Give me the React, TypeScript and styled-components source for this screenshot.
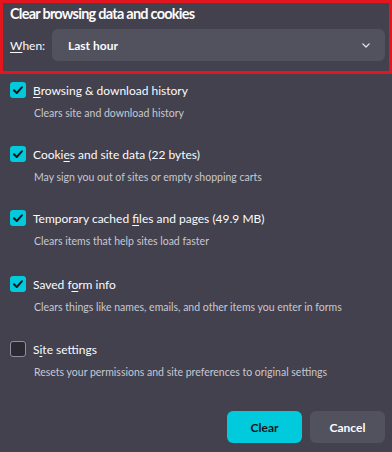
import React from "react";
import styled, { createGlobalStyle } from "styled-components";

const Global = createGlobalStyle`
  html, body { margin: 0; padding: 0; background: #42414d; }
  body { font-family: Lato, "Noto Sans", sans-serif; color: #fbfbfe; }
  * { box-sizing: border-box; }
`;

const Dialog = styled.div`
  width: 392px;
  height: 452px;
  background: #42414d;
  display: flex;
  flex-direction: column;
`;

const Header = styled.div`
  height: 74px;
  border: 3px solid #e2161e;
  padding: 1px 4px 0 7px;
  display: flex;
  flex-direction: column;
`;

const Title = styled.h1`
  margin: 0;
  font-size: 14.5px;
  font-weight: 700;
  letter-spacing: -0.75px;
  line-height: 20px;
`;

const WhenRow = styled.div`
  margin-top: 5px;
  display: flex;
  align-items: center;
`;

const WhenLabel = styled.label`
  font-size: 12px;
  width: 42px;
`;

const Select = styled.div`
  flex: 1;
  height: 32px;
  border-radius: 6px;
  background: #52525e;
  display: flex;
  align-items: center;
  padding: 0 15px 0 16px;
  font-size: 12px;
  font-weight: 700;
`;

const SelectText = styled.span`
  flex: 1;
`;

const List = styled.div`
  padding: 8px 0 0 10px;
  display: flex;
  flex-direction: column;
`;

const Item = styled.div<{ $gap: number }>`
  display: flex;
  flex-direction: column;
  margin-bottom: ${(p) => p.$gap}px;
`;

const Row = styled.label`
  display: flex;
  align-items: center;
  height: 16px;
  gap: 7px;
  font-size: 12px;
`;

const Box = styled.span<{ $checked: boolean }>`
  width: 16px;
  height: 16px;
  border-radius: 3px;
  flex: none;
  display: flex;
  align-items: center;
  justify-content: center;
  background: ${(p) => (p.$checked ? "#00cadb" : "#2b2a33")};
  border: ${(p) => (p.$checked ? "none" : "1px solid #8f8f9d")};
`;

const Desc = styled.div`
  margin-top: 7px;
  padding-left: 24px;
  font-size: 10.5px;
  line-height: 16px;
  color: #c8c8d2;
`;

const Footer = styled.div`
  margin-top: auto;
  display: flex;
  justify-content: flex-end;
  gap: 8px;
  padding: 0 7px 9px 0;
`;

const Button = styled.button<{ $primary?: boolean }>`
  width: 75px;
  height: 32px;
  border: none;
  border-radius: 6px;
  font-family: inherit;
  font-size: 12px;
  font-weight: 700;
  background: ${(p) => (p.$primary ? "#00cadb" : "#52525e")};
  color: ${(p) => (p.$primary ? "#15141a" : "#fbfbfe")};
`;

const U = styled.u`
  text-decoration-thickness: 1px;
  text-underline-offset: 2px;
`;

const Check = () => (
  <svg width="12" height="12" viewBox="0 0 12 12">
    <path d="M2 6.2 L4.8 9 L10 3.2" fill="none" stroke="#15141a" strokeWidth="2" strokeLinecap="round" strokeLinejoin="round" />
  </svg>
);

const Chevron = () => (
  <svg width="8" height="5" viewBox="0 0 8 5">
    <path d="M0.8 0.8 L4 4 L7.2 0.8" fill="none" stroke="#e8e8ee" strokeWidth="1.2" strokeLinecap="round" strokeLinejoin="round" />
  </svg>
);

type Opt = { label: React.ReactNode; desc: string; checked: boolean; gap: number };

const options: Opt[] = [
  { label: <><U>B</U>rowsing &amp; download history</>, desc: "Clears site and download history", checked: true, gap: 25 },
  { label: <>Cooki<U>e</U>s and site data (22 bytes)</>, desc: "May sign you out of sites or empty shopping carts", checked: true, gap: 25 },
  { label: <>Temporary cached <U>f</U>iles and pages (49.9 MB)</>, desc: "Clears items that help sites load faster", checked: true, gap: 27 },
  { label: <>Saved f<U>o</U>rm info</>, desc: "Clears things like names, emails, and other items you enter in forms", checked: true, gap: 26 },
  { label: <>S<U>i</U>te settings</>, desc: "Resets your permissions and site preferences to original settings", checked: false, gap: 0 },
];

export default function App() {
  return (
    <>
      <Global />
      <Dialog>
        <Header>
          <Title>Clear browsing data and cookies</Title>
          <WhenRow>
            <WhenLabel><U>W</U>hen:</WhenLabel>
            <Select>
              <SelectText>Last hour</SelectText>
              <Chevron />
            </Select>
          </WhenRow>
        </Header>
        <List>
          {options.map((o, i) => (
            <Item key={i} $gap={o.gap}>
              <Row>
                <Box $checked={o.checked}>{o.checked && <Check />}</Box>
                <span>{o.label}</span>
              </Row>
              <Desc>{o.desc}</Desc>
            </Item>
          ))}
        </List>
        <Footer>
          <Button $primary>Clear</Button>
          <Button>Cancel</Button>
        </Footer>
      </Dialog>
    </>
  );
}
